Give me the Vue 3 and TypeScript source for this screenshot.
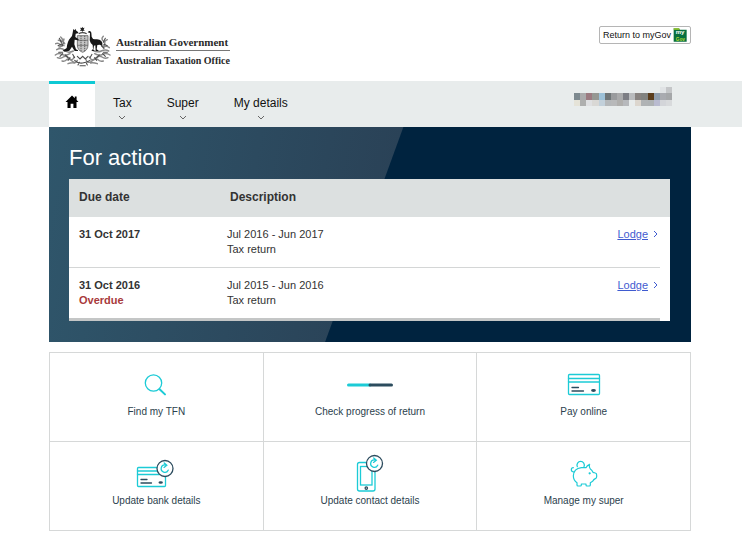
<script setup lang="ts">
interface Action {
  due: string
  overdue: boolean
  period: string
  kind: string
}

const menus: string[] = ['Tax', 'Super', 'My details']

const actions: Action[] = [
  { due: '31 Oct 2017', overdue: false, period: 'Jul 2016 - Jun 2017', kind: 'Tax return' },
  { due: '31 Oct 2016', overdue: true, period: 'Jul 2015 - Jun 2016', kind: 'Tax return' },
]

const shortcuts: { icon: string; label: string }[] = [
  { icon: 'search', label: 'Find my TFN' },
  { icon: 'progress', label: 'Check progress of return' },
  { icon: 'card', label: 'Pay online' },
  { icon: 'bank', label: 'Update bank details' },
  { icon: 'phone', label: 'Update contact details' },
  { icon: 'pig', label: 'Manage my super' },
]

// Colour blocks that stand in for the hidden user name, row by row.
const maskRows: string[][] = [
  ['', '', '', '', '', '', '', '', '', '', '', '', '', '', '#e0e3e5', '#c4c6c8'],
  ['#7d898f', '#aaaaab', '#9b7a80', '#959792', '#9cc1d8', '#6f7678', '#999b9d', '#a9aaab', '#7c7e84', '#b9bbbd', '#888380', '#81827f', '#5a3d1c', '#8f9ead', '#a9abb0', '#a5a7a9'],
  ['#e5e3d8', '#aeafae', '#dfe0e2', '#d9d8d5', '#c2d0da', '#b5b8ba', '#b8b9ba', '#b0afad', '#b7b9bc', '', '#dcd6ce', '#b0b3b5', '#aeb2b4', '#b9bbd0', '#d3d5d9', '#d8dadc'],
]
</script>

<template>
  <div class="page">
    <header class="masthead wrap">
      <a class="brand" href="#">
        <svg class="crest" viewBox="42 30 174 126" aria-hidden="true">
          <g fill="none" stroke="#8a8a8a" stroke-width="4.4" stroke-linecap="round">
            <path d="M62 66q8 6 4 14t6 12M55 76q10 0 10 10t-8 10M47 86q8-3 14 3M72 72q-5 8 2 14M50 104q14-8 24 2t26 2M46 120q10-8 20-2t24-2M52 128q10 4 18-2t18 4 14-4M66 138q10 2 14-4t16 4 16-2M190 64q-8 8 0 14t2 12M202 74q-10 4-8 12t-8 8M208 98q-10-8-18 0M206 108q-10-6-22 0t-26-2M210 120q-12-8-22-2t-24-2M204 128q-10 4-18-2t-20 4-18-4M190 138q-12 2-16-4t-18 4-18-4M84 146q10-4 20-2M172 146q-12-4-20-2" />
          </g>
          <g fill="none" stroke="#4c4c4c" stroke-width="3.2" stroke-linecap="round">
            <path d="M58 70l6 12M54 92l10-4M70 84l-4 10M196 70l-6 12M202 92l-10-4M184 92l8 8M56 112h12M60 124l8-8M76 120l8 8M84 136l6-8M98 118l6 10M190 112h12M196 124l-8-8M178 120l-8 8M170 136l-6-8M156 118l-6 10M112 124l8 8 8-8 8 8 8-8M104 136q10 10 24 8t22-8M120 152h16M118 142l-4 8M138 142l4 8" />
          </g>
          <path d="M112 62h32v28q0 16-16 22q-16-6-16-22z" fill="#c4c4c4" stroke="#5f5f5f" stroke-width="2.4" />
          <path d="M112 76h32M112 91h32M123 62v46M134 62v46" stroke="#6a6a6a" stroke-width="3.4" stroke-dasharray="4 2" />
          <path d="M116 56q12-6 24 0" fill="none" stroke="#444" stroke-width="3.4" />
          <path d="M127 35l2 4 5-1-3 5 3 5-5-1-2 4-2-4-5 1 3-5-3-5 5 1z" fill="#222" />
          <path d="M100 42l4 4 2-5 3 6 6 5-1 3-7 1-1 10 10 7-1 3-11-2-1 14 5 15 6 3v2h-10l-8-13-8 12-14 3-6-3 12-8q2-20 11-30q7-7 7-16z" fill="#171717" />
          <path d="M143 52l4-4q6-1 7 5l1 12q3 9 11 8q12-2 18 5q5 6 3 14l-8-3-7 1-2 13 7 5h-10l-1-17-4 1-2 12 4 4h-10l5-6-1-12q-7-4-9-14l1-22z" fill="#171717" />
        </svg>
        <span class="names">
          <span class="government">Australian Government</span>
          <span class="office">Australian Taxation Office</span>
        </span>
      </a>
      <button class="return" type="button">
        Return to myGov
        <svg class="mygov" viewBox="0 0 42 42" aria-hidden="true">
          <path d="M2 1h16l3 4h20v36H2z" fill="#08703f" />
          <path d="M2 1h16l3 4H2z" fill="#a5cf2c" />
          <text x="21" y="18" text-anchor="middle" font-size="18" font-weight="bold" fill="#fff">my</text>
          <text x="22" y="38" text-anchor="middle" font-size="14" font-weight="bold" fill="#b9dc32">Gov</text>
        </svg>
      </button>
    </header>

    <nav class="band">
      <div class="bar wrap">
        <a class="home" href="#" aria-label="Home">
          <svg viewBox="0 0 14 14" aria-hidden="true">
            <path d="M7 0.5L0.5 7H2.5V13H5.6V8.8H8.4V13H11.5V7H13.5L11.6 5.1V1.5H9.8V3.3z" />
          </svg>
        </a>
        <button v-for="menu in menus" :key="menu" class="menu" type="button">
          {{ menu }}
          <svg viewBox="0 0 8 5" aria-hidden="true"><path d="M1 1l3 3 3-3" /></svg>
        </button>
        <svg class="mask" viewBox="0 0 16 3" preserveAspectRatio="none" shape-rendering="crispEdges" aria-hidden="true">
          <template v-for="(row, y) in maskRows" :key="y">
            <rect v-for="(colour, x) in row" :key="x" :x="x" :y="y" width="1" height="1" :fill="colour || 'none'" />
          </template>
        </svg>
      </div>
    </nav>

    <main class="wrap">
      <section class="panel">
        <h1>For action</h1>
        <table>
          <thead>
            <tr>
              <th class="due">Due date</th>
              <th colspan="3" class="description">Description</th>
            </tr>
          </thead>
          <tbody>
            <tr v-for="action in actions" :key="action.due">
              <td class="due">
                {{ action.due }}
                <span v-if="action.overdue" class="overdue">Overdue</span>
              </td>
              <td>{{ action.period }}<br />{{ action.kind }}</td>
              <td class="lodge">
                <a href="#">Lodge</a>
                <svg viewBox="0 0 5 8" aria-hidden="true"><path d="M1 1l3 3-3 3" /></svg>
              </td>
              <td class="edge"></td>
            </tr>
          </tbody>
        </table>
      </section>

      <section class="tiles">
        <a v-for="item in shortcuts" :key="item.icon" class="tile" href="#">
          <svg class="icon" viewBox="0 0 60 40" aria-hidden="true">
            <template v-if="item.icon === 'search'">
              <circle cx="27.5" cy="19" r="8.2" />
              <path d="M33.6 25.2L39 30.4" stroke-width="2" />
            </template>
            <template v-else-if="item.icon === 'progress'">
              <path d="M8.5 21H30" stroke-width="3" />
              <path class="dark" d="M30 21H51.5" stroke-width="3" />
            </template>
            <template v-else-if="item.icon === 'card'">
              <rect x="14.5" y="10.5" width="31" height="20" rx="1" />
              <path d="M14.5 14.5h31M14.5 18h31" />
              <path class="dark" d="M18 23.5h6.5M18 27h11.5" />
              <ellipse class="dot" cx="39.5" cy="26.5" rx="2.4" ry="1.4" />
            </template>
            <template v-else-if="item.icon === 'bank'">
              <rect x="11.5" y="14.5" width="28" height="19" rx="1" />
              <path d="M11.5 18h20M11.5 21.5h22" />
              <path class="dark" d="M15 26.5h6M15 30h10.5" />
              <ellipse class="dot" cx="34.7" cy="29.5" rx="2.2" ry="1.3" />
              <circle class="dark badge" cx="39" cy="15.5" r="8" />
              <path d="M42.2 17.2a3.7 3.7 0 1 1-2.8-5.3M38.2 9.9l2.6 2.3-2.8 2.2" />
            </template>
            <template v-else-if="item.icon === 'phone'">
              <rect x="17.5" y="9.5" width="17.5" height="28.5" rx="2" />
              <rect x="20.5" y="13.5" width="11.5" height="18.5" />
              <circle class="dark" cx="26.3" cy="35.1" r="1.2" />
              <circle class="dark badge" cx="34.5" cy="10.5" r="8" />
              <path d="M37.7 12.2a3.7 3.7 0 1 1-2.8-5.3M33.7 4.9l2.6 2.3-2.8 2.2" />
            </template>
            <g v-else transform="scale(.3333) translate(-69 -9)" stroke-width="3.6" stroke-linejoin="round">
              <path d="M175 43q-1 8 3 14q5 3 8 10l7 2q4 1 4 6v5q0 4-4 6q-5 2-8 8l-7 4v7q0 3-3 3h-7q-3 0-3-3v-3h-14v3q0 3-3 3h-7q-3 0-3-3v-7q-11-8-11-21q1-21 24-24h14q3-6 11-10z" />
              <path d="M139 50a11 11 0 1 1 20 0M129 66q-8-1-8-7t6-6" />
              <circle class="eye" cx="176" cy="70" r="1.6" />
            </g>
          </svg>
          {{ item.label }}
        </a>
      </section>
    </main>
  </div>
</template>

<style>
body {
  margin: 0;
  background: #fff;
}
</style>

<style scoped>
.page {
  font-family: "Liberation Sans", Arial, sans-serif;
  color: #333;
}

.wrap {
  padding: 0 51px 0 49px;
}

button {
  margin: 0;
  font-family: inherit;
  color: #111;
}

.masthead {
  display: flex;
  justify-content: space-between;
  align-items: flex-start;
  padding-top: 25px;
  padding-bottom: 14px;
}

.brand {
  display: flex;
  gap: 4px;
  height: 42px;
  padding-left: 5px;
  color: #2a2a2a;
  font: bold 11px/15px "Liberation Serif", "Times New Roman", serif;
  text-decoration: none;
  white-space: nowrap;
}

.crest {
  width: 58px;
  height: 42px;
}

.names {
  display: flex;
  flex-direction: column;
  padding-top: 10px;
}

.government {
  border-bottom: 1px solid #777;
}

.office {
  padding-top: 2px;
  font-size: 10px;
}

.return {
  display: flex;
  align-items: center;
  gap: 2px;
  margin-top: 1px;
  padding: 1px 3px;
  border: 1px solid #b5b5b5;
  border-radius: 2px;
  background: #fff;
  font-size: 9px;
  line-height: 14px;
}

.mygov {
  width: 14px;
  height: 14px;
}

.band {
  background: #e8ecec;
}

.bar {
  display: flex;
  gap: 1px;
}

.home {
  display: flex;
  justify-content: center;
  width: 46px;
  height: 46px;
  box-sizing: border-box;
  padding-top: 11px;
  border-top: 3px solid #0fc9d4;
  background: #fff;
}

.home svg {
  width: 14px;
  height: 14px;
}

.menu {
  display: flex;
  flex-direction: column;
  align-items: center;
  gap: 5px;
  padding: 15px 17px 0;
  border: 0;
  background: none;
  font-size: 12px;
  line-height: 14px;
}

.menu svg {
  width: 8px;
  height: 5px;
  fill: none;
  stroke: #666;
}

.mask {
  width: 98px;
  height: 19px;
  margin: 6px 19px 0 auto;
}

.panel {
  position: relative;
  z-index: 0;
  padding: 18px 21px 21px 20px;
  background: #00233f;
}

.panel::before {
  content: "";
  position: absolute;
  inset: 0;
  z-index: -1;
  background: linear-gradient(100deg, #2f566b, #2a4257 52%);
  clip-path: polygon(0 0, 55.2% 0, 43% 100%, 0 100%);
}

h1 {
  margin: 0 0 8px;
  color: #fff;
  font-size: 22px;
  font-weight: normal;
  line-height: 26px;
}

table {
  width: 100%;
  border-spacing: 0;
  background: #fff;
  font-size: 11px;
  line-height: 15px;
}

th {
  padding: 11px 0 13px;
  background: #dce0e0;
  font-size: 12px;
  line-height: 14px;
  text-align: left;
}

th.description {
  padding-left: 3px;
}

td {
  padding: 10px 0;
  border-bottom: 1px solid #d4d6d6;
  vertical-align: top;
}

tr:last-child td {
  border-bottom: 3px solid #c4c6c6;
}

.due {
  width: 148px;
  padding-left: 10px;
  font-weight: bold;
}

.overdue {
  display: block;
  color: #a83a3c;
}

.lodge {
  color: #3f5bd0;
  text-align: right;
}

.lodge a {
  color: inherit;
}

.lodge svg {
  width: 5px;
  height: 8px;
  margin: 0 2px 0 5px;
  fill: none;
  stroke: currentColor;
}

tr td.edge {
  width: 10px;
  border-bottom-color: #fff;
}

.tiles {
  display: grid;
  grid-template-columns: repeat(3, 1fr);
  gap: 1px;
  margin-top: 10px;
  border: 1px solid #d6d8d8;
  background: #d6d8d8;
}

.tile {
  display: flex;
  flex-direction: column;
  align-items: center;
  gap: 1px;
  padding: 11px 0 22px;
  background: #fff;
  color: #2b414d;
  font-size: 10px;
  line-height: 14px;
  text-decoration: none;
}

.icon {
  width: 60px;
  height: 40px;
  fill: none;
  stroke: #1ccbd6;
  stroke-width: 1.3;
  stroke-linecap: round;
}

.dark {
  stroke: #2c4c5e;
}

.badge {
  fill: #fff;
}

.dot {
  fill: #2c4c5e;
  stroke: none;
}

.eye {
  fill: #1ccbd6;
}
</style>
